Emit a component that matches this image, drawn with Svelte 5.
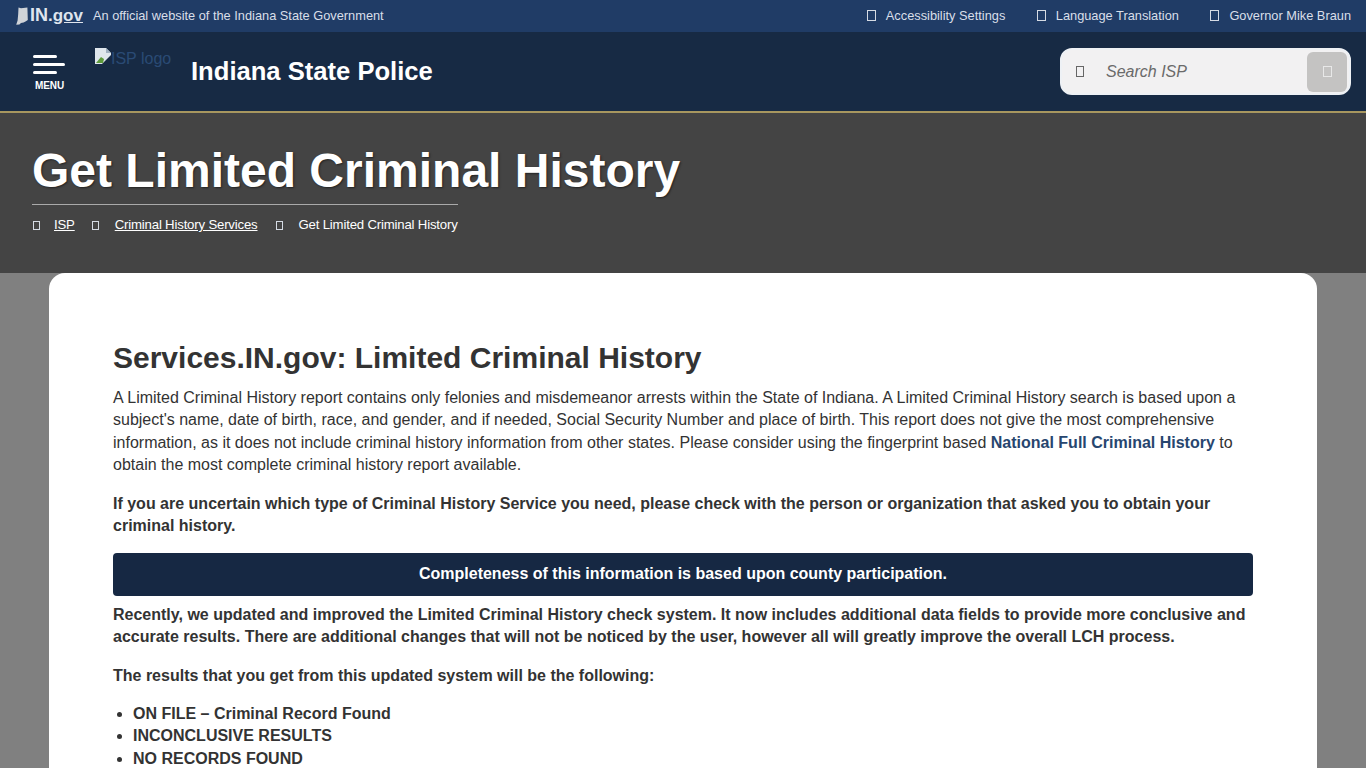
<script>
  const utility = ['Accessibility Settings', 'Language Translation', 'Governor Mike Braun'];
</script>

<div class="page">
  <div class="topbar">
    <div class="brand">
      <a class="ingov" href="#top">
        <svg class="state" viewBox="0 0 12 18" width="12" height="18" aria-hidden="true">
          <path d="M2.5 0.5 L5 1.2 L11.4 0.6 L11.8 13 L9.5 14.4 L7.6 15.6 L5 16 L3.4 17.6 L0.2 17.7 L1.6 13.5 L2.2 7 Z" />
        </svg>
        <span class="in">IN</span><span class="gov">.<u>gov</u></span>
      </a>
      <span class="official">An official website of the Indiana State Government</span>
    </div>
    <ul class="utility">
      {#each utility as item}
        <li><i class="tofu"></i><span>{item}</span></li>
      {/each}
    </ul>
  </div>

  <header class="header">
    <button class="menu" type="button">
      <span class="bar short"></span>
      <span class="bar"></span>
      <span class="bar short"></span>
      <span class="menu-label">MENU</span>
    </button>
    <div class="logo">
      <svg class="broken" viewBox="0 0 16 16" width="16" height="16" aria-hidden="true">
        <path d="M0 0H11L16 5V7L8 15L7 16H0Z" fill="#dfe6ec" />
        <path d="M11 0L16 5H11Z" fill="#9fb0c0" />
        <path d="M1 15L6 9L9 11L8 15H1Z" fill="#5e9a3c" />
      </svg>
      <span>ISP logo</span>
    </div>
    <div class="site-title">Indiana State Police</div>
    <div class="search">
      <i class="tofu dark"></i>
      <span class="placeholder">Search ISP</span>
      <button class="go" type="button"><i class="tofu light"></i></button>
    </div>
  </header>

  <section class="hero">
    <h1>Get Limited Criminal History</h1>
    <nav class="crumbs">
      <i class="tofu"></i><a class="home" href="#isp">ISP</a>
      <i class="tofu"></i><a href="#chs">Criminal History Services</a>
      <i class="tofu"></i><span>Get Limited Criminal History</span>
    </nav>
  </section>

  <main class="card">
    <h2>Services.IN.gov: Limited Criminal History</h2>
    <p>A Limited Criminal History report contains only felonies and misdemeanor arrests within the State of Indiana. A Limited Criminal History search is based upon a subject's name, date of birth, race, and gender, and if needed, Social Security Number and place of birth. This report does not give the most comprehensive information, as it does not include criminal history information from other states. Please consider using the fingerprint based <a href="#full">National Full Criminal History</a> to obtain the most complete criminal history report available.</p>
    <p class="b">If you are uncertain which type of Criminal History Service you need, please check with the person or organization that asked you to obtain your criminal history.</p>
    <div class="notice">Completeness of this information is based upon county participation.</div>
    <p class="b">Recently, we updated and improved the Limited Criminal History check system. It now includes additional data fields to provide more conclusive and accurate results. There are additional changes that will not be noticed by the user, however all will greatly improve the overall LCH process.</p>
    <p class="b">The results that you get from this updated system will be the following:</p>
    <ul class="results">
      <li>ON FILE – Criminal Record Found</li>
      <li>INCONCLUSIVE RESULTS</li>
      <li>NO RECORDS FOUND</li>
    </ul>
  </main>
</div>

<style>
  :global(body) {
    margin: 0;
    background: #808080;
  }
  .page {
    height: 768px;
    overflow: hidden;
    font-family: "Liberation Sans", Arial, sans-serif;
    font-size: 16px;
    color: #333;
    background: #808080;
  }
  .tofu {
    display: inline-block;
    box-sizing: border-box;
    width: 9px;
    height: 11px;
    border: 1px solid #d5dbe4;
    flex: none;
  }
  .topbar {
    height: 32px;
    box-sizing: border-box;
    display: flex;
    align-items: center;
    justify-content: space-between;
    padding: 0 15px 2px 16px;
    background: #203c66;
    color: #d9dfe9;
    font-size: 12.8px;
  }
  .brand {
    display: flex;
    align-items: center;
    gap: 10px;
  }
  .ingov {
    display: flex;
    align-items: center;
    color: #dfe5ee;
    text-decoration: none;
    line-height: 1;
  }
  .state {
    fill: #cfd3d8;
    margin-top: 2px;
  }
  .in {
    font-size: 18px;
    font-weight: 700;
    margin-left: 2px;
  }
  .gov {
    font-size: 17px;
    font-weight: 700;
  }
  .utility {
    display: flex;
    gap: 31.5px;
    list-style: none;
    margin: 0;
    padding: 0;
  }
  .utility li {
    display: flex;
    align-items: center;
    gap: 10px;
  }
  .header {
    height: 81px;
    box-sizing: border-box;
    border-bottom: 2px solid #a8975f;
    background: #172a44;
    display: flex;
    align-items: center;
    padding: 0 15px 0 33px;
  }
  .menu {
    width: 32px;
    padding: 0;
    border: 0;
    background: none;
    color: #fff;
    display: flex;
    flex-direction: column;
    align-items: flex-start;
    align-self: flex-start;
    margin-top: 23px;
  }
  .bar {
    display: block;
    width: 32px;
    height: 3px;
    border-radius: 2px;
    background: #fff;
    margin-bottom: 5px;
  }
  .bar.short {
    width: 24px;
  }
  .menu-label {
    font: 700 10px/1 "Liberation Sans", Arial, sans-serif;
    margin: 2px 0 0 2px;
    letter-spacing: -0.1px;
  }
  .logo {
    width: 96px;
    margin-left: 30px;
    align-self: flex-start;
    margin-top: 16px;
    display: flex;
    color: #2a4a75;
    line-height: 22px;
  }
  .broken {
    flex: none;
  }
  .site-title {
    font-size: 25.6px;
    font-weight: 700;
    color: #fff;
    flex: 1;
  }
  .search {
    width: 291px;
    height: 47px;
    box-sizing: border-box;
    border-radius: 12px;
    background: #f2f1f2;
    border: 2px solid #eef1f5;
    display: flex;
    align-items: center;
    padding: 0 2px 0 14px;
    color: #6a6a6a;
  }
  .tofu.dark {
    border-color: #666;
    width: 8px;
    height: 11px;
  }
  .placeholder {
    flex: 1;
    font-style: italic;
    margin-left: 22px;
  }
  .go {
    width: 40px;
    height: 40px;
    padding: 0;
    border: 0;
    border-radius: 6px;
    background: #c4c3c2;
    display: flex;
    align-items: center;
    justify-content: center;
  }
  .tofu.light {
    border-color: #e8e8e8;
    width: 9px;
    height: 11px;
  }
  .hero {
    height: 160px;
    box-sizing: border-box;
    background: #444;
    padding: 32px 32px 0;
    color: #fff;
  }
  h1 {
    margin: 0;
    display: table;
    font-size: 48px;
    line-height: 52px;
    text-shadow: 1px 1px 2px #222;
  }
  .crumbs {
    display: inline-flex;
    align-items: center;
    margin-top: 7px;
    padding-top: 10px;
    border-top: 1px solid #aaa;
    font-size: 13.2px;
    line-height: 20px;
    letter-spacing: -0.18px;
  }
  .crumbs a {
    color: #fff;
    margin: 0 17px 0 16px;
  }
  .crumbs a.home {
    margin: 0 16px 0 14px;
  }
  .crumbs span {
    margin-left: 16px;
  }
  .crumbs .tofu {
    width: 7px;
    height: 9px;
    margin-left: 1px;
  }
  .card {
    margin: 0 49px;
    padding: 65px 64px 0;
    background: #fff;
    border-radius: 16px 16px 0 0;
    min-height: 600px;
    line-height: 22.4px;
  }
  h2 {
    margin: 0 0 9px;
    font-size: 30px;
    line-height: 40px;
    color: #333;
  }
  p {
    margin: 0 0 16px;
  }
  p a {
    color: #27466f;
    font-weight: 700;
    text-decoration: none;
  }
  .b {
    font-weight: 700;
  }
  .notice {
    background: #162843;
    color: #fff;
    font-weight: 700;
    text-align: center;
    border-radius: 4px;
    padding: 10px 16px;
    margin: 0 0 8px;
  }
  .results {
    margin: 0;
    padding-left: 20px;
    font-weight: 700;
  }
</style>
